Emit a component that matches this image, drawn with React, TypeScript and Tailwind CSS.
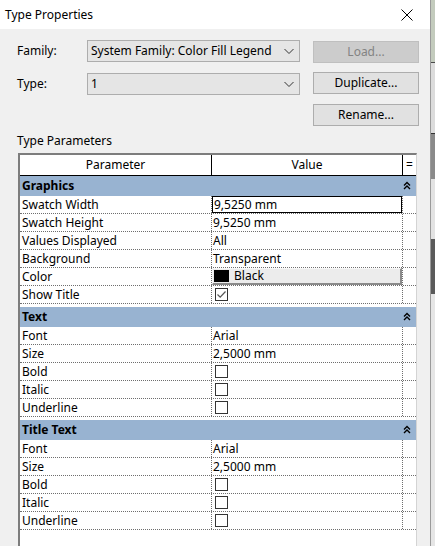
import React from 'react';

type Row = { name: string; kind: 'text' | 'edit' | 'color' | 'check'; value?: string; checked?: boolean };
type Group = { title: string; rows: Row[] };

const groups: Group[] = [
  {
    title: 'Graphics',
    rows: [
      { name: 'Swatch Width', kind: 'edit', value: '9,5250 mm' },
      { name: 'Swatch Height', kind: 'text', value: '9,5250 mm' },
      { name: 'Values Displayed', kind: 'text', value: 'All' },
      { name: 'Background', kind: 'text', value: 'Transparent' },
      { name: 'Color', kind: 'color', value: 'Black' },
      { name: 'Show Title', kind: 'check', checked: true },
    ],
  },
  {
    title: 'Text',
    rows: [
      { name: 'Font', kind: 'text', value: 'Arial' },
      { name: 'Size', kind: 'text', value: '2,5000 mm' },
      { name: 'Bold', kind: 'check' },
      { name: 'Italic', kind: 'check' },
      { name: 'Underline', kind: 'check' },
    ],
  },
  {
    title: 'Title Text',
    rows: [
      { name: 'Font', kind: 'text', value: 'Arial' },
      { name: 'Size', kind: 'text', value: '2,5000 mm' },
      { name: 'Bold', kind: 'check' },
      { name: 'Italic', kind: 'check' },
      { name: 'Underline', kind: 'check' },
    ],
  },
];

const Chevron = () => (
  <svg width="10" height="16" viewBox="0 0 10 16" className="block">
    <path d="M2 7.5 L5 4.5 L8 7.5 M2 11 L5 8 L8 11" fill="none" stroke="#000" strokeWidth="1.4" />
  </svg>
);

const ComboArrow = () => (
  <svg width="12" height="8" viewBox="0 0 12 8" className="block">
    <path d="M1.5 2 L6 6.5 L10.5 2" fill="none" stroke="#333" strokeWidth="1" />
  </svg>
);

const Checkbox = ({ checked }: { checked?: boolean }) => (
  <div className="w-[13px] h-[13px] border border-[#333] bg-white flex items-center justify-center">
    {checked && (
      <svg width="11" height="11" viewBox="0 0 11 11">
        <path d="M1.5 5.5 L4.2 8.2 L9.5 2.5" fill="none" stroke="#555" strokeWidth="1.2" />
      </svg>
    )}
  </div>
);

const ValueCell = ({ row }: { row: Row }) => {
  if (row.kind === 'edit') {
    return (
      <div className="h-full border border-black bg-white pl-[1px] flex items-center">{row.value}</div>
    );
  }
  if (row.kind === 'color') {
    return (
      <div className="h-full bg-[#ececec] border-t border-l border-[#f8f8f8] border-r-2 border-b-2 border-r-[#8a8a8a] border-b-[#8a8a8a] flex items-center pl-[1px] gap-[5px]">
        <div className="w-[15px] h-[12px] bg-black" />
        <span>{row.value}</span>
      </div>
    );
  }
  if (row.kind === 'check') {
    return (
      <div className="h-full flex items-center pl-[3px]">
        <Checkbox checked={row.checked} />
      </div>
    );
  }
  return <div className="h-full flex items-center pl-[1px]">{row.value}</div>;
};

const Button = ({ label, disabled }: { label: string; disabled?: boolean }) => (
  <div
    className={
      disabled
        ? 'w-[106px] h-[22px] border border-[#bfbfbf] bg-[#cccccc] text-[#838383] flex items-center justify-center'
        : 'w-[106px] h-[22px] border border-[#adadad] bg-[#e1e1e1] text-black flex items-center justify-center'
    }
  >
    {label}
  </div>
);

const Combo = ({ value }: { value: string }) => (
  <div className="w-[213px] h-[22px] border border-[#adadad] bg-[#e5e5e5] flex items-center justify-between pl-[3px] pr-[4px]">
    <span>{value}</span>
    <ComboArrow />
  </div>
);

export default function App() {
  return (
    <div
      className="w-[435px] h-[546px] flex overflow-hidden text-[12px] text-black"
      style={{ fontFamily: '"Noto Sans", "Open Sans", Arial, sans-serif' }}
    >
      <div className="w-[431px] flex flex-col bg-[#f0f0f0] border-r border-[#9a9a9a]">
        {/* Title bar */}
        <div className="h-[29px] shrink-0 bg-white flex items-center justify-between pl-[5px] pr-[17px]">
          <span className="text-[12px]">Type Properties</span>
          <svg width="12" height="12" viewBox="0 0 12 12">
            <path d="M0.5 0.5 L11.5 11.5 M11.5 0.5 L0.5 11.5" stroke="#000" strokeWidth="1" />
          </svg>
        </div>

        {/* Body */}
        <div className="flex-1 flex flex-col pl-[17px] pt-[11px]">
          <div className="flex items-start">
            <div className="w-[70px] h-[22px] flex items-center">Family:</div>
            <Combo value="System Family: Color Fill Legend" />
            <div className="ml-[13px] mt-[1px]">
              <Button label="Load..." disabled />
            </div>
          </div>
          <div className="flex items-start mt-[9px]">
            <div className="w-[70px] h-[22px] mt-[1px] flex items-center">Type:</div>
            <div className="mt-[1px]">
              <Combo value="1" />
            </div>
            <div className="ml-[13px]">
              <Button label="Duplicate..." />
            </div>
          </div>
          <div className="flex justify-start mt-[9px] ml-[296px]">
            <Button label="Rename..." />
          </div>

          <div className="mt-[7px] h-[16px] flex items-center">Type Parameters</div>

          {/* Parameter table */}
          <div className="mt-[4px] ml-[1px] w-[399px] flex-1 bg-white border-l-2 border-t-2 border-[#7d7d7d] border-r border-r-[#d4d4d4]">
            <div className="flex h-[21px] border-b border-black">
              <div className="w-[192px] flex items-center justify-center border-r border-black">Parameter</div>
              <div className="w-[191px] flex items-center justify-center border-r border-black">Value</div>
              <div className="flex-1 flex items-center justify-center">=</div>
            </div>
            {groups.map((g, gi) => (
              <div key={gi} className={gi === 0 ? '' : 'mt-[3px]'}>
                <div className="h-[20px] bg-[#98b3d1] flex items-center justify-between pl-[2px] pr-[4px]">
                  <span className="font-bold">{g.title}</span>
                  <Chevron />
                </div>
                {g.rows.map((r, ri) => (
                  <div key={ri} className="flex h-[18px] border-b border-dotted border-[#6e6e6e]">
                    <div className="w-[192px] flex items-center pl-[2px] border-r border-dotted border-[#6e6e6e]">
                      {r.name}
                    </div>
                    <div className="w-[191px] border-r border-dotted border-[#6e6e6e]">
                      <ValueCell row={r} />
                    </div>
                    <div className="flex-1" />
                  </div>
                ))}
              </div>
            ))}
          </div>
        </div>
      </div>

      {/* Background application peeking at the right edge */}
      <div className="flex-1 flex flex-col">
        <div className="h-[62px] bg-[#c3cbbd]" />
        <div className="h-[1px] bg-[#4a4a4a]" />
        <div className="h-[70px] bg-[#dcdcdc]" />
        <div className="h-[1px] bg-[#333]" />
        <div className="h-[45px] bg-[#8a8a8a]" />
        <div className="h-[60px] bg-[#e3e3e3]" />
        <div className="h-[55px] bg-[#5a5a5a]" />
        <div className="flex-1 bg-[#e6e6e6]" />
      </div>
    </div>
  );
}
